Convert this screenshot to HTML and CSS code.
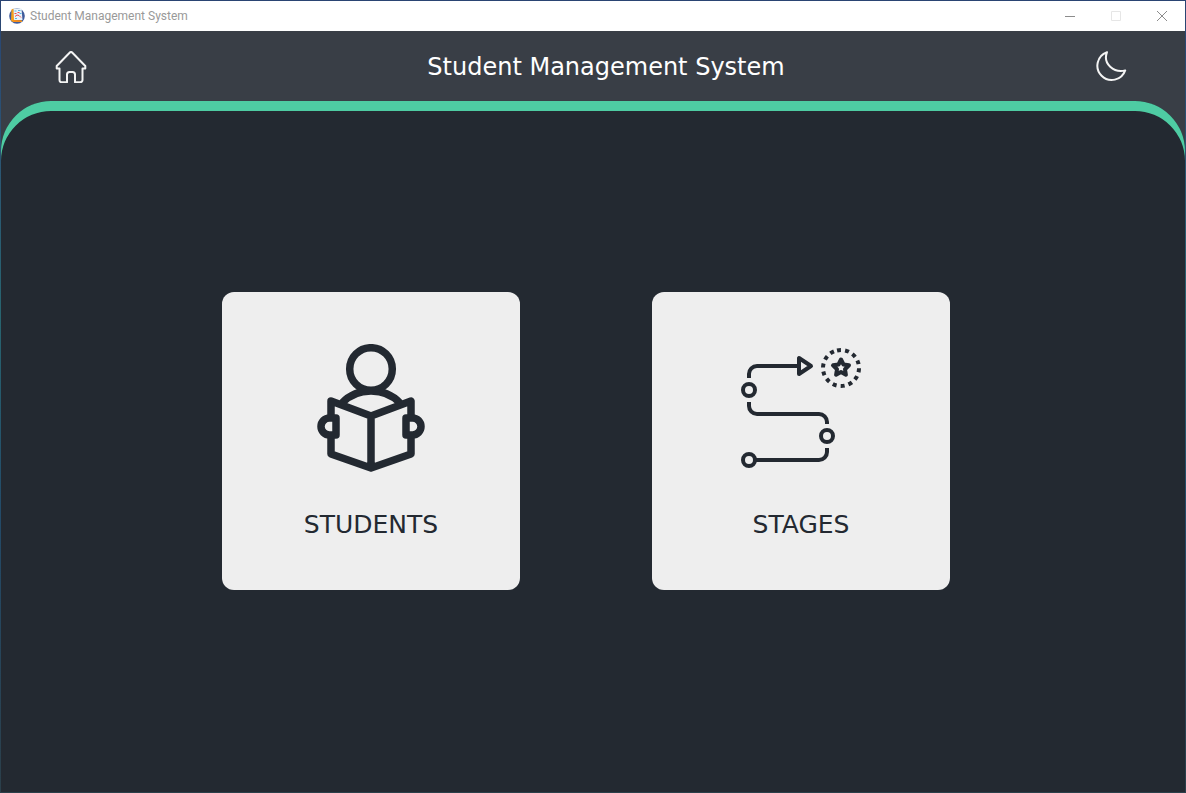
FILE: index.html
```html
<!DOCTYPE html>
<html lang="en">
<head>
<meta charset="utf-8">
<title>Student Management System</title>
<link rel="stylesheet" href="styles.css">
</head>
<body>
<div class="window">
  <div class="titlebar">
    <svg class="app-icon" viewBox="0 0 16 16" aria-hidden="true">
      <circle cx="8" cy="8" r="7.800" fill="#3f5b9c"/>
      <path d="M2.500 1.500 4.500.5 6 12l7 .5v1.500H4L2 12.500Z" fill="#f7a11b"/>
      <path d="M4.500.5H12.500l1 11.500H5Z" fill="#e9f3fa"/>
      <path d="M5.500 3h2M9 2.500h2.500M10.500 5.500h2M6 10.500h2" stroke="#58b7e6" fill="none"/>
      <path d="M5.500 5.500h2M6 8.500l2-1.500 2 .5 2 2M8.500 4.500h2" stroke="#ef4b4b" fill="none"/>
      <path d="M4 13h8" stroke="#f47c20" fill="none"/>
    </svg>
    <span class="titlebar-text">Student Management System</span>
    <div class="window-controls">
      <button class="control" aria-label="Minimize"><svg viewBox="0 0 10 10"><path d="M0 5.500h10"/></svg></button>
      <button class="control" aria-label="Maximize" disabled><svg viewBox="0 0 10 10"><path d="M.5.5h9v9h-9z"/></svg></button>
      <button class="control" aria-label="Close"><svg viewBox="0 0 10 10"><path d="M0 0l10 10M10 0 0 10"/></svg></button>
    </div>
  </div>
  <div class="app">
    <header class="header">
      <button class="icon-button" aria-label="Home">
        <svg viewBox="0 0 32 32"><path d="M4.500 17.500H1.700V15L14.600 1.700a2 2 0 0 1 2.800 0L30.300 15v2.500H27.500V29a2.200 2.200 0 0 1-2.200 2.200H20V23.500a2.500 2.500 0 0 0-2.500-2.500h-3a2.500 2.500 0 0 0-2.500 2.500v7.700H6.700A2.200 2.200 0 0 1 4.500 29Z"/></svg>
      </button>
      <h1 class="title">Student Management System</h1>
      <button class="icon-button" aria-label="Dark mode">
        <svg viewBox="0 0 32 32"><path d="M12 1.200A14.300 14.300 0 1 0 30.200 19.400C19 22 7.500 13 12 1.200Z"/></svg>
      </button>
    </header>
    <main class="main">
      <button class="card">
        <svg class="card-icon reader" viewBox="0 0 128 128" aria-hidden="true">
          <circle cx="64" cy="25" r="21.300"/>
          <path d="M35 59C50 43 78 43 93 59"/>
          <path d="M24 74V57L64 72l40-15V74M24 93v17l40 14 40-14V93M64 72v52"/>
          <path d="M29 74h-6.500a8.500 8.500 0 0 0 0 17H29ZM99 74h6.500a8.500 8.500 0 0 1 0 17H99Z"/>
        </svg>
        <span class="card-label">STUDENTS</span>
      </button>
      <button class="card">
        <svg class="card-icon route" viewBox="0 0 128 128" aria-hidden="true">
          <path d="M12 34v-4a8 8 0 0 1 8-8h41M12 58v4a8 8 0 0 0 8 8h62a8 8 0 0 1 8 8v2M90 104v4a8 8 0 0 1-8 8H18"/>
          <path d="M62 14v16l12-8Z"/>
          <circle cx="12" cy="46" r="6"/>
          <circle cx="90" cy="92" r="6"/>
          <circle cx="12" cy="116" r="6"/>
          <circle cx="104" cy="24" r="18" stroke-dasharray="4 4.078" transform="rotate(-102.700 104 24)"/>
          <path d="M104 15.500l2.500 5 5.500.8-4 3.900.9 5.500-4.900-2.600-4.900 2.600.9-5.500-4-3.900 5.500-.8Z"/>
        </svg>
        <span class="card-label">STAGES</span>
      </button>
    </main>
  </div>
</div>
</body>
</html>
```

FILE: styles.css
```css
* {
  box-sizing: border-box;
}

body {
  margin: 0;
}

button {
  padding: 0;
  border: 0;
  background: none;
  font: inherit;
  color: inherit;
}

.window {
  display: flex;
  flex-direction: column;
  min-height: 100vh;
  padding: 1px;
  background: linear-gradient(#2a4473, #2b5573 20%, #28646f 40%, #234a68 65%, #2b3f4a);
}

.titlebar {
  display: flex;
  align-items: center;
  height: 30px;
  padding-left: 8px;
  background: #fff;
}

.app-icon {
  width: 16px;
  height: 16px;
  margin-right: 5px;
}

.titlebar-text {
  flex: 1;
  font: 12px/16px Roboto, "Open Sans", sans-serif;
  color: #999;
}

.window-controls {
  display: flex;
}

.control {
  display: grid;
  place-items: center;
  width: 46px;
  height: 30px;
}

.control svg {
  width: 10px;
  height: 10px;
  fill: none;
  stroke: #8c8c8c;
}

.control:disabled svg {
  stroke: #e6e6e6;
}

.app {
  flex: 1;
  display: flex;
  flex-direction: column;
  background: #393e46;
  font-family: Verdana, "DejaVu Sans", sans-serif;
}

.header {
  display: flex;
  align-items: center;
  height: 70px;
  padding: 2px 58px 0 54px;
}

.icon-button {
  width: 32px;
  height: 32px;
}

.icon-button svg {
  display: block;
  fill: none;
  stroke: #f4f4f4;
  stroke-width: 2;
  stroke-linejoin: round;
}

.title {
  flex: 1;
  margin: 0;
  padding-left: 30px;
  font-size: 24px;
  font-weight: 400;
  line-height: 32px;
  text-align: center;
  color: #fff;
}

.main {
  flex: 1;
  display: flex;
  justify-content: center;
  align-items: center;
  gap: 132px;
  padding: 10px 14px 22px 0;
  border-radius: 50px 50px 0 0;
  background: #232931;
  box-shadow: inset 0 10px #4ecca3;
}

.card {
  display: flex;
  flex-direction: column;
  align-items: center;
  gap: 36px;
  width: 298px;
  padding: 52px 0 49px;
  border-radius: 12px;
  background: #eee;
  color: #232931;
}

.card-icon {
  width: 128px;
  height: 128px;
  fill: none;
  stroke: currentColor;
  stroke-linejoin: round;
}

.reader {
  stroke-width: 7.500;
}

.route {
  stroke-width: 4;
}

.card-label {
  font-size: 25px;
  line-height: 33px;
}
```
